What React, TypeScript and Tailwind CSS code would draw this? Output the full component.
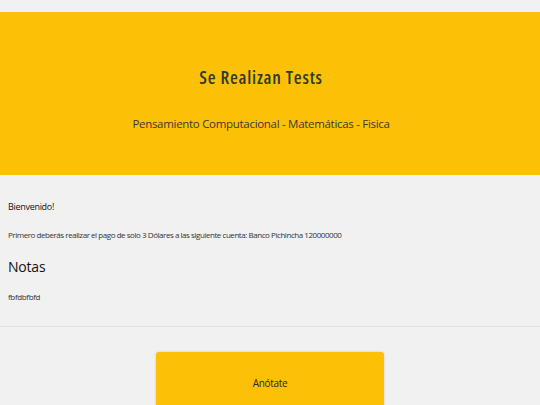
export default function App() {
  return (
    <div
      className="h-[405px] bg-[#f1f1f1] text-[#222] overflow-hidden"
      style={{ fontFamily: '"Open Sans", "Noto Sans", sans-serif' }}
    >
      {/* Hero */}
      <div className="pt-3">
        <div className="bg-[#fcc107] h-[163px] flex flex-col items-center pt-[56px] pr-[18px]">
          <h1 className="text-[18px] leading-none font-semibold font-stretch-semi-condensed tracking-[0.8px] text-[#2d3a2d]">
            Se Realizan Tests
          </h1>
          <p className="text-[11.5px] leading-none tracking-[-0.3px] text-[#3a3a2a] mt-[32px]">
            Pensamiento Computacional - Matemáticas - Fisica
          </p>
        </div>
      </div>

      {/* Content */}
      <div className="px-2 pt-[25px] pb-[23px] border-b border-[#e2e2e2]">
        <p className="text-[9px] tracking-[-0.3px] font-medium text-[#111]">Bienvenido!</p>
        <p className="text-[8px] tracking-[-0.45px] text-[#333] mt-[15px]">
          Primero deberás realizar el pago de solo 3 Dólares a las siguiente cuenta: Banco Pichincha 120000000
        </p>
        <h2 className="text-[14px] tracking-[-0.2px] text-[#111] mt-[15px]">Notas</h2>
        <p className="text-[8px] tracking-[-0.35px] text-[#333] mt-[14px]">fbfdbfbfd</p>
      </div>

      {/* Action */}
      <div className="flex justify-center pt-[25px]">
        <button className="w-[228px] h-[80px] bg-[#fcc107] rounded-[3px] shadow-[0_0_3px_rgba(0,0,0,0.15)] text-[10px] tracking-[-0.3px] text-[#2a2a1a] flex justify-center pt-[24px]">
          Anótate
        </button>
      </div>
    </div>
  );
}
